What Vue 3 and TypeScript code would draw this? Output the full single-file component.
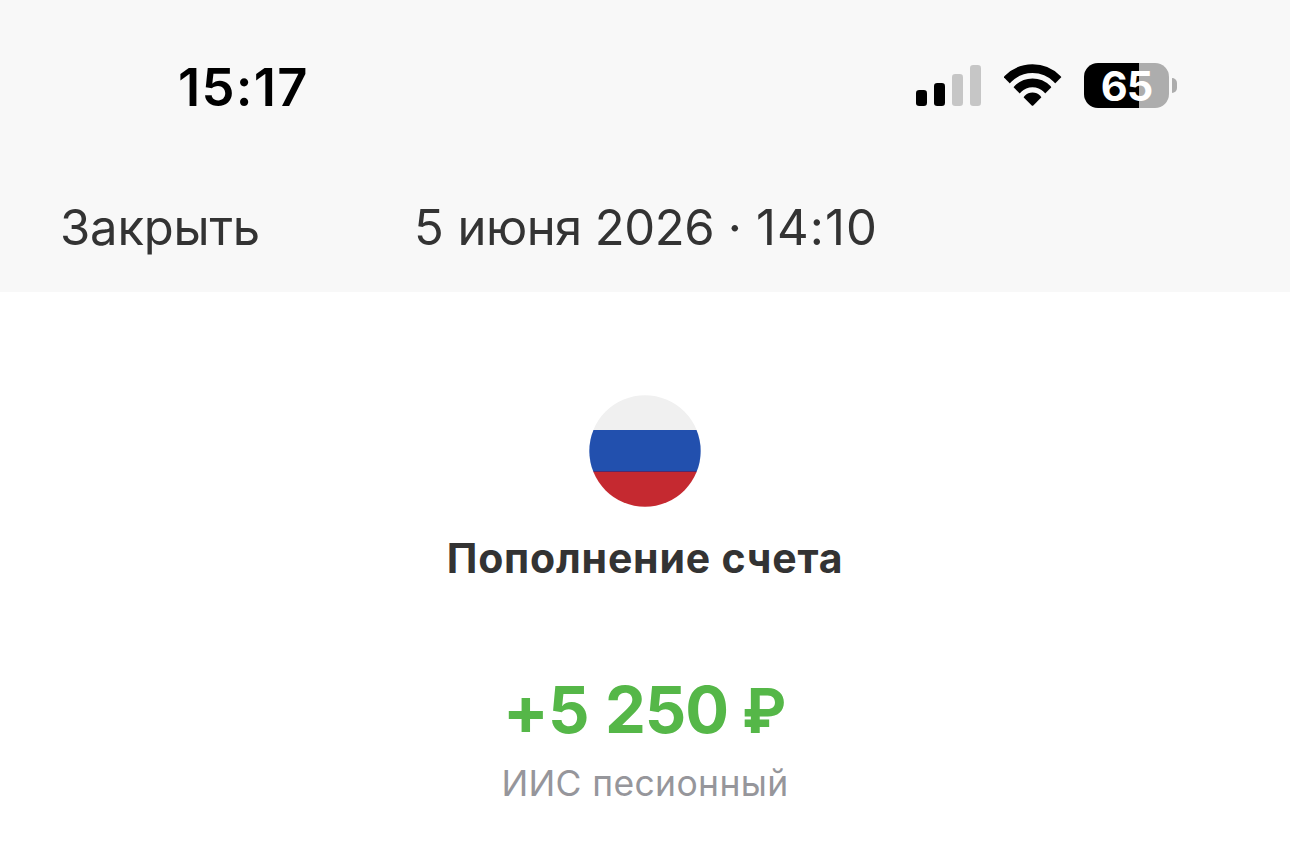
<script setup lang="ts">
const time: string = '15:17'
const bars = [
  { x: 0, y: 27, h: 16, on: true },
  { x: 18, y: 20, h: 23, on: true },
  { x: 36, y: 11, h: 32, on: false },
  { x: 54, y: 2, h: 41, on: false },
]
</script>

<template>
  <main class="screen">
    <header class="top">
      <div class="status">
        <span class="time">{{ time }}</span>
        <svg class="signal" width="66" height="44" viewBox="0 0 66 44">
          <rect v-for="b in bars" :key="b.x" :x="b.x" :y="b.y" width="11" :height="b.h" rx="3.2" :fill="b.on ? '#000' : '#c6c6c6'" />
        </svg>
        <svg class="wifi" width="58" height="43" viewBox="0 0 58 43">
          <defs><clipPath id="fan"><path d="M27.500 41.300L-1.300 12.300V-2H58.300V12.300L29.500 41.300Q28.500 42.300 27.500 41.300Z" /></clipPath></defs>
          <g clip-path="url(#fan)" fill="none" stroke="#000">
            <circle cx="28.500" cy="39.400" r="34.700" stroke-width="8.800" />
            <circle cx="28.500" cy="39.400" r="20.600" stroke-width="8.800" />
            <circle cx="28.500" cy="39.400" r="10.900" fill="#000" stroke="none" />
          </g>
        </svg>
        <div class="battery"><span>65</span></div>
        <i class="cap"></i>
      </div>
      <nav class="bar">
        <span class="close">Закрыть</span>
        <span class="date"><span>5 </span><span class="month">июня </span><span class="year">2026 </span><span class="dot">· </span><span class="clock">14:10</span></span>
      </nav>
    </header>
    <section class="content">
      <svg class="flag" width="112" height="112" viewBox="0 0 112 112">
        <defs><clipPath id="disc"><circle cx="56" cy="56" r="55.700" /></clipPath></defs>
        <g clip-path="url(#disc)">
          <path fill="#f0f0f0" d="M0 0H112V35H0Z" />
          <path fill="#2250ae" d="M0 35H112V76H0Z" />
          <path fill="#55286b" d="M0 76H112V77H0Z" />
          <path fill="#c52930" d="M0 77H112V112H0Z" />
        </g>
      </svg>
      <h1>Пополнение счета</h1>
      <p class="amount"><span class="plus">+</span><span class="digits">5 250</span><span class="ruble">₽</span></p>
      <p class="account">ИИС песионный</p>
    </section>
  </main>
</template>

<style>
body { margin: 0; background: #fff; }
</style>
<style scoped>
.screen { width: 1290px; height: 846px; overflow: hidden; background: #fff; font-family: Inter, "Liberation Sans", sans-serif; color: #333; }
.top { height: 292px; background: #f8f8f8; }
.status { display: flex; height: 172px; box-sizing: border-box; padding: 63px 0 0 178px; }
.time { width: 738px; font-size: 52.500px; line-height: 49px; font-weight: 600; color: #000; letter-spacing: 1.3px; }
.wifi { margin: 1px 0 0 22px; }
.battery { width: 85px; height: 45px; margin-left: 22px; border-radius: 14px; background: linear-gradient(90deg, #000 55px, #adadad 55px); color: #fff; font-size: 41.500px; line-height: 46px; font-weight: 700; text-align: center; letter-spacing: -1px; }
.cap { width: 5px; height: 15px; margin: 15px 0 0 3px; border-radius: 0 6px 6px 0; background: #adadad; }
.bar { display: grid; grid-template-columns: 354px 1fr; padding: 26px 0 0 60px; font-size: 49px; line-height: 59px; white-space: pre; }
.close { letter-spacing: -.2px; }
.month { letter-spacing: -.6px; }
.year { letter-spacing: -.4px; }
.dot { letter-spacing: .2px; }
.clock { letter-spacing: 1.1px; }
.content { display: flex; flex-direction: column; align-items: center; padding-top: 103px; }
h1 { margin: 24px 0 0; font-size: 41px; line-height: 54px; font-weight: 700; letter-spacing: .8px; }
p { margin: 0; white-space: nowrap; }
.amount { display: flex; margin-top: 85px; font-size: 65px; line-height: 80px; font-weight: 700; color: #55b748; }
.plus { height: 80px; margin-right: -1px; font-size: 68px; }
.digits { letter-spacing: -1px; word-spacing: 2px; }
.ruble { margin-left: 13px; font-size: 62px; line-height: 81px; transform: scaleX(.96); }
.account { margin-top: 9px; font-size: 35.500px; line-height: 48px; letter-spacing: .35px; color: #96969b; }
</style>
